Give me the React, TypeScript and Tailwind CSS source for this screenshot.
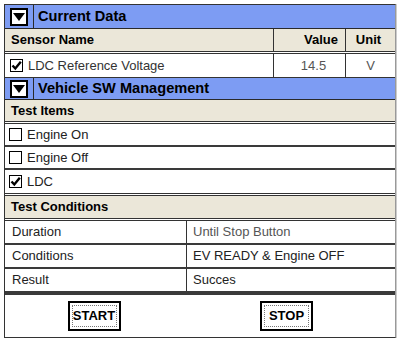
import React from "react";

const font = { fontFamily: '"Liberation Sans", Arial, sans-serif' };

function Toggle() {
  return (
    <div className="flex h-full w-[29px] items-center justify-center border-r border-[#2a2a2a]">
      <div className="flex h-[18px] w-[18px] items-center justify-center border-2 border-black bg-white">
        <svg width="12" height="10" viewBox="0 0 12 10">
          <polygon points="0,1 12,1 6,9" fill="black" />
        </svg>
      </div>
    </div>
  );
}

function Box({ checked }: { checked?: boolean }) {
  return (
    <div className="flex h-[13px] w-[13px] shrink-0 items-center justify-center border border-black bg-white">
      {checked && (
        <svg width="11" height="11" viewBox="0 0 11 11">
          <path d="M1.5 5.5 L4.3 8.5 L9.8 1.8" stroke="black" strokeWidth="2.4" fill="none" />
        </svg>
      )}
    </div>
  );
}

function Double() {
  return <div className="h-[3px] border-y border-[#333] bg-white" />;
}

function BlueBar({ title, h }: { title: string; h: string }) {
  return (
    <div className={`flex ${h} items-center bg-[#7d9cf3] border-b border-[#2a2a2a]`}>
      <Toggle />
      <span className="pl-[4px] text-[14.6px] font-bold text-black">{title}</span>
    </div>
  );
}

function ItemRow({ label, checked, last }: { label: string; checked?: boolean; last?: boolean }) {
  return (
    <div className={`flex h-[23px] items-center gap-[5px] pl-[4px] bg-white ${last ? "" : "border-b-2 border-[#3a3a3a]"}`}>
      <Box checked={checked} />
      <span className="text-[13px] text-[#222]">{label}</span>
    </div>
  );
}

function CondRow({ k, v, vc, last }: { k: string; v: string; vc: string; last?: boolean }) {
  return (
    <div className={`flex h-[24px] bg-white ${last ? "" : "border-b-2 border-[#3a3a3a]"}`}>
      <div className="flex w-[182px] items-center border-r border-[#333] pl-[7px] text-[13px] text-[#222]">{k}</div>
      <div className={`flex flex-1 items-center pl-[6px] text-[13px] ${vc}`}>{v}</div>
    </div>
  );
}

function Btn({ label }: { label: string }) {
  return (
    <div className="flex h-[30px] w-[53px] items-center justify-center border-2 border-black bg-white p-[2px]">
      <div className="flex h-full w-full items-center justify-center border border-dotted border-[#777] text-[13px] font-bold text-black">
        {label}
      </div>
    </div>
  );
}

export default function App() {
  return (
    <div className="h-[340px] w-[400px] bg-white pl-[4px] pt-[4px]" style={font}>
      <div className="flex w-[392px] flex-col border border-[#333] border-r-[#999] shadow-[1px_0_0_#ccc]">
        <BlueBar title="Current Data" h="h-[24px]" />
        <div className="flex h-[22px] bg-[#ebe7d9] text-[13px] font-bold text-black">
          <div className="flex flex-1 items-center pl-[6px]">Sensor Name</div>
          <div className="flex w-[72px] items-center justify-end border-l border-[#333] pr-[7px]">Value</div>
          <div className="flex w-[50px] items-center justify-center border-l border-[#333] pr-[4px]">Unit</div>
        </div>
        <Double />
        <div className="flex h-[24px] bg-white text-[13px] border-b border-[#333]">
          <div className="flex flex-1 items-center gap-[5px] pl-[5px] text-[#333]">
            <Box checked />
            <span>LDC Reference Voltage</span>
          </div>
          <div className="flex w-[72px] items-center justify-center border-l border-[#333] pl-[8px] text-[#555]">14.5</div>
          <div className="flex w-[50px] items-center justify-center border-l border-[#333] text-[#555]">V</div>
        </div>
        <BlueBar title="Vehicle SW Management" h="h-[22px]" />
        <div className="flex h-[21px] items-center bg-[#ebe7d9] pl-[6px] text-[13px] font-bold text-black">Test Items</div>
        <Double />
        <ItemRow label="Engine On" />
        <ItemRow label="Engine Off" />
        <ItemRow label="LDC" checked last />
        <Double />
        <div className="flex h-[22px] items-center bg-[#ebe7d9] pl-[6px] text-[13px] font-bold text-black">Test Conditions</div>
        <Double />
        <CondRow k="Duration" v="Until Stop Button" vc="text-[#555]" />
        <CondRow k="Conditions" v="EV READY & Engine OFF" vc="text-[#222]" />
        <CondRow k="Result" v="Succes" vc="text-[#222]" />
        <div className="flex h-[44px] border-t-2 border-[#3a3a3a] bg-white">
          <div className="flex w-[182px] items-center justify-center pr-[4px]">
            <Btn label="START" />
          </div>
          <div className="flex flex-1 items-center justify-center pr-[9px]">
            <Btn label="STOP" />
          </div>
        </div>
      </div>
    </div>
  );
}
